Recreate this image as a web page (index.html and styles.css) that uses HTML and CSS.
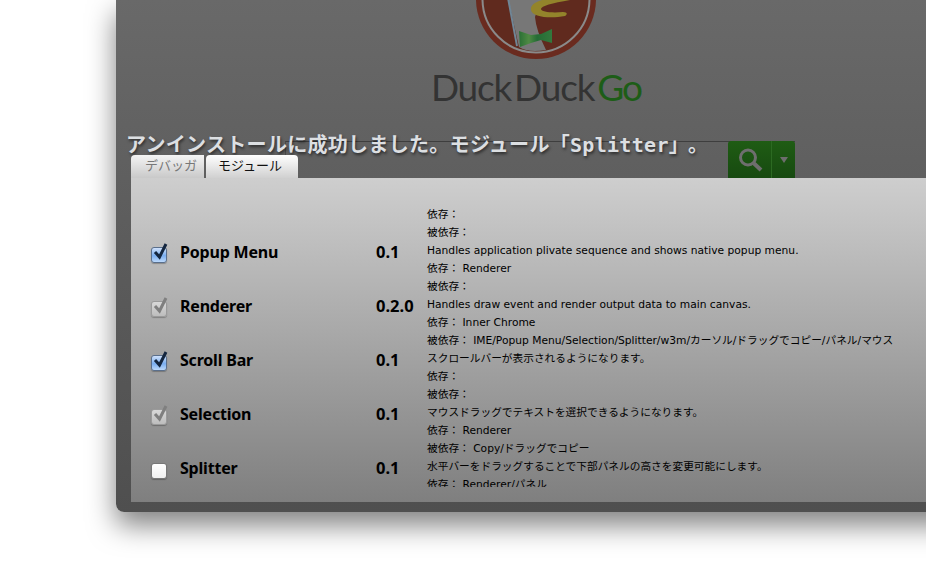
FILE: index.html
```html
<!DOCTYPE html>
<html lang="ja">
<head>
<meta charset="utf-8">
<title>モジュール</title>
<link rel="stylesheet" href="styles.css">
</head>
<body>
<div class="window">
  <div class="stage">
    <div class="brand">
      <svg class="logo" width="120" height="60" viewBox="476 0 120 60" aria-hidden="true">
        <defs>
          <linearGradient id="bow" x1="0" x2="1" y1="0" y2="0">
            <stop offset="0" stop-color="#2a6f35"/>
            <stop offset=".3" stop-color="#4f8a44"/>
            <stop offset=".55" stop-color="#256c35"/>
            <stop offset="1" stop-color="#33793d"/>
          </linearGradient>
        </defs>
        <circle cx="536" cy="-1" r="60" fill="#6a2b1f"/>
        <circle cx="536" cy="-1" r="53.5" fill="#602a1e" stroke="#8a8a8a" stroke-width="2"/>
        <path d="M508 -2 L519 47 Q528 53 546 50 Q536 30 535 17 Q537 8 548 0 L548 -2 Z" fill="#777"/>
        <path d="M508 -2 L517 46" fill="none" stroke="#6f8696" stroke-width="2"/>
        <path d="M552 -2 C538 0 530 4 531 10 C532 17 550 19 565 16 C568 14 567 12 563 12 C552 13 541 12 541 9 C541 6 552 3 570 0 L570 -2 Z" fill="#93842b"/>
        <path d="M519 31 L531 35 L541 34 L552 29 L552 43 L541 40 L531 43 L520 47 Z" fill="url(#bow)"/>
      </svg>
      <div class="wordmark"><span>Duck</span><span class="duck2">Duck</span><span class="go">Go</span></div>
    </div>
    <div class="search">
      <div class="search-button">
        <div class="search-icon">
          <svg width="26" height="26" viewBox="0 0 26 26" aria-hidden="true">
            <circle cx="11" cy="10.5" r="7.5" fill="none" stroke="#6e6e6e" stroke-width="3"/>
            <path d="M16.5 16 L24 23" stroke="#6e6e6e" stroke-width="4"/>
          </svg>
        </div>
        <div class="search-drop"><span class="caret"></span></div>
      </div>
    </div>
    <div class="notice">アンインストールに成功しました。モジュール「Splitter<span class="close-quote">」</span>。</div>
    <div class="tabs">
      <div class="tab">デバッガ</div>
      <div class="tab tab-active">モジュール</div>
    </div>
  </div>
  <div class="panel">
    <div class="list">
      <div class="row">
        <span class="check"><svg class="box-svg" width="20" height="22" viewBox="0 0 20 22"><path class="mark mark-on" d="M4 11 L8.5 16 L15 3"/></svg></span>
        <span class="name">Popup Menu</span>
        <span class="ver">0.1</span>
        <div class="desc"><p>依存：</p><p>被依存：</p><p>Handles application plivate sequence and shows native popup menu.</p></div>
      </div>
      <div class="row">
        <span class="check check-off"><svg class="box-svg" width="20" height="22" viewBox="0 0 20 22"><path class="mark mark-off" d="M4 11 L8.5 16 L15 3"/></svg></span>
        <span class="name">Renderer</span>
        <span class="ver">0.2.0</span>
        <div class="desc"><p>依存： Renderer</p><p>被依存：</p><p>Handles draw event and render output data to main canvas.</p></div>
      </div>
      <div class="row">
        <span class="check"><svg class="box-svg" width="20" height="22" viewBox="0 0 20 22"><path class="mark mark-on" d="M4 11 L8.5 16 L15 3"/></svg></span>
        <span class="name">Scroll Bar</span>
        <span class="ver">0.1</span>
        <div class="desc"><p>依存： Inner Chrome</p><p>被依存： IME/Popup Menu/Selection/Splitter/w3m/カーソル/ドラッグでコピー/パネル/マウス</p><p>スクロールバーが表示されるようになります。</p></div>
      </div>
      <div class="row">
        <span class="check check-off"><svg class="box-svg" width="20" height="22" viewBox="0 0 20 22"><path class="mark mark-off" d="M4 11 L8.5 16 L15 3"/></svg></span>
        <span class="name">Selection</span>
        <span class="ver">0.1</span>
        <div class="desc"><p>依存：</p><p>被依存：</p><p>マウスドラッグでテキストを選択できるようになります。</p></div>
      </div>
      <div class="row">
        <span class="check check-empty"></span>
        <span class="name">Splitter</span>
        <span class="ver">0.1</span>
        <div class="desc"><p>依存： Renderer</p><p>被依存： Copy/ドラッグでコピー</p><p>水平バーをドラッグすることで下部パネルの高さを変更可能にします。</p></div>
      </div>
      <div class="row">
        <div class="desc desc-only"><p>依存： Renderer/パネル</p></div>
      </div>
    </div>
  </div>
</div>
</body>
</html>
```
FILE: styles.css
```css
html, body {
  margin: 0;
  height: 100%;
  overflow: hidden;
  background: #fff;
}

body {
  padding-left: 116px;
  font-family: "DejaVu Sans", "Noto Sans CJK JP", sans-serif;
  color: #000;
}

.window {
  width: 860px;
  height: 512px;
  box-sizing: border-box;
  padding: 0 0 10px 15px;
  border-radius: 0 0 8px 8px;
  background: linear-gradient(180deg, #696969 0, #5f5f5f 178px, #4f4f4f 100%);
  box-shadow: 0 13px 28px rgba(0, 0, 0, .5);
  display: flex;
  flex-direction: column;
}

.stage {
  position: relative;
  height: 178px;
  flex: none;
}

.brand {
  width: 840px;
  display: flex;
  flex-direction: column;
  align-items: center;
  margin-left: -15px;
}

.logo {
  display: block;
}

.wordmark {
  margin-top: 7px;
  font-family: "Lato", sans-serif;
  font-weight: 400;
  font-size: 37px;
  line-height: 40px;
  letter-spacing: -1.2px;
  color: #333;
  white-space: nowrap;
}

.duck2 {
  margin-left: 3px;
}

.go {
  color: #1d5d17;
  margin-left: 3px;
  letter-spacing: -2px;
}

.search {
  position: absolute;
  left: 154px;
  top: 141px;
  width: 510px;
  height: 37px;
  box-sizing: border-box;
  border-top: 1px solid #3e3e3e;
  border-left: 1px solid #4a4a4a;
  display: flex;
  justify-content: flex-end;
}

.search-button {
  width: 67px;
  height: 37px;
  margin-top: -1px;
  background: linear-gradient(180deg, #1f5c14, #174a10);
  border-radius: 3px 3px 0 0;
  display: flex;
  flex: none;
}

.search-icon {
  width: 43px;
  border-right: 1px solid #2c6a22;
  display: flex;
  align-items: center;
  justify-content: center;
}

.search-drop {
  flex: 1;
  display: flex;
  align-items: center;
  justify-content: center;
}

.caret {
  width: 0;
  height: 0;
  border-left: 4px solid transparent;
  border-right: 4px solid transparent;
  border-top: 6px solid #6d6d6d;
}

.notice {
  position: absolute;
  left: -5px;
  top: 133px;
  font-family: "DejaVu Sans Mono", "Noto Sans CJK JP", monospace;
  font-weight: 700;
  font-size: 20px;
  line-height: 24px;
  letter-spacing: .3px;
  color: #dcdfe2;
  white-space: nowrap;
  text-shadow: 1px 2px 3px rgba(0, 0, 0, .55);
}

.close-quote {
  margin-right: 9px;
}

.tabs {
  position: absolute;
  left: 0;
  bottom: 0;
  display: flex;
  gap: 2px;
}

.tab {
  height: 23px;
  width: 73px;
  box-sizing: border-box;
  padding-left: 14px;
  border-radius: 4px 0 0 0;
  background: linear-gradient(180deg, #f4f4f4, #c9c9c9);
  font-size: 13px;
  line-height: 21px;
  color: #777;
}

.tab-active {
  width: 92px;
  padding-left: 12px;
  border-radius: 4px 4px 0 0;
  background: linear-gradient(180deg, #ffffff, #d0d0d0);
  color: #111;
}

.panel {
  flex: 1;
  min-height: 0;
  padding-top: 27px;
  background: linear-gradient(180deg, #cecece, #7f7f7f);
}

.list {
  height: 282px;
  box-sizing: border-box;
  padding-top: 4px;
  overflow: hidden;
}

.row {
  height: 54px;
  display: grid;
  grid-template-columns: 20px 205px 51px 1fr;
  padding-left: 20px;
  align-items: end;
}

.name {
  padding-left: 9px;
  font-family: "Noto Sans", sans-serif;
  font-size: 16px;
  letter-spacing: -.2px;
  font-weight: 700;
  line-height: 22px;
}

.ver {
  font-family: "Noto Sans", sans-serif;
  font-size: 16.5px;
  font-weight: 700;
  line-height: 22px;
}

.desc {
  align-self: start;
  margin: -3px 0 3px;
  font-size: 10.7px;
  line-height: 18px;
  white-space: nowrap;
}

.desc-only {
  grid-column: 4;
}

.desc p {
  margin: 0;
}

.check {
  position: relative;
  display: block;
  width: 16px;
  height: 16px;
  box-sizing: border-box;
  border: 1px solid #5a6f8c;
  border-radius: 3px;
  background: linear-gradient(180deg, #cfe1fb, #7aaef0 55%, #bcd9fb);
  box-shadow: 0 1px 1px rgba(0, 0, 0, .25);
}

.check-off {
  border-color: #9a9a9a;
  background: linear-gradient(180deg, #d8d8d8, #bdbdbd);
}

.check-empty {
  border-color: #777;
  background: linear-gradient(180deg, #fff, #f0f0f0);
}

.box-svg {
  position: absolute;
  left: -1px;
  top: -7px;
  overflow: visible;
}

.mark {
  fill: none;
  stroke-width: 3;
}

.mark-on {
  stroke: #14263f;
}

.mark-off {
  stroke: #7f7f7f;
}
```
